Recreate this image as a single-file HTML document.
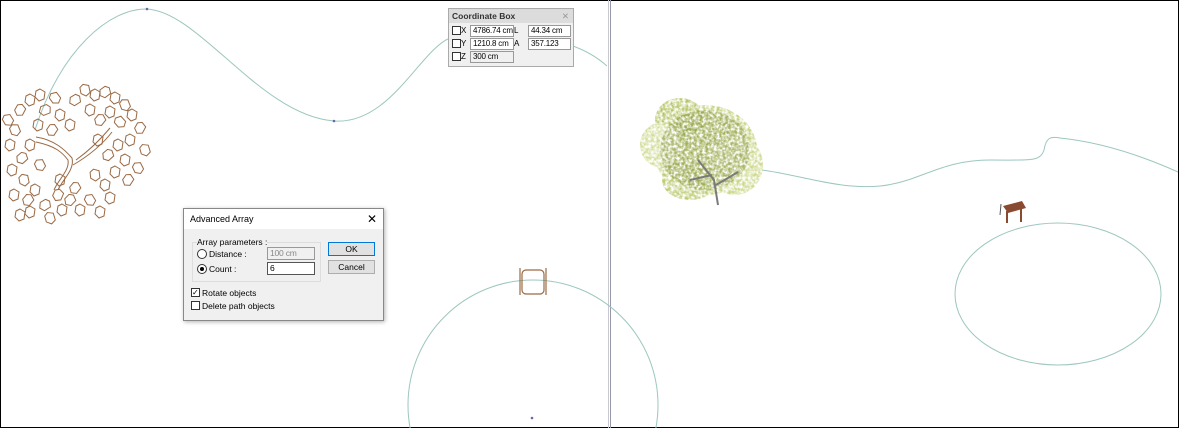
<!DOCTYPE html><html><head><style>
body{margin:0;width:1179px;height:428px;overflow:hidden;background:#fff;font-family:"Liberation Sans",sans-serif;font-size:11px;position:relative}
#c{position:absolute;left:0;top:0;width:1177px;height:426px;border:1px solid #000}
svg{display:block}
.cb{position:absolute;left:448px;top:8px;width:124px;height:57px;background:#f0f0f0;border:1px solid #aaa;font-size:8px}
.cb .t{background:#dcdcdc;height:14px;line-height:14px;padding-left:3px;font-weight:bold;color:#333;font-size:8.5px}
.in{position:absolute;background:#fff;border:1px solid #999;height:10px;line-height:10px;padding-left:2px;font-size:8px;white-space:nowrap;overflow:hidden;letter-spacing:-0.2px}
.ro{background:#f0f0f0}
.ck{position:absolute;width:7px;height:7px;border:1px solid #333;background:#fff}
.dlg{position:absolute;left:183px;top:208px;width:199px;height:111px;background:#f0f0f0;border:1px solid #888;box-shadow:1px 1px 4px rgba(0,0,0,.3);font-size:8.5px;color:#000}
.dlg .ti{background:#fff;height:20px;line-height:20px;padding-left:6px;font-size:9px}
.btn{position:absolute;width:45px;height:12px;line-height:12px;text-align:center;background:#e1e1e1;border:1px solid #adadad}
</style></head><body>
<div id="c"></div>
<svg width="1179" height="428" style="position:absolute;left:0;top:0;overflow:hidden">
<defs>
<path id="l" d="M0,-6 L5,-3 L4,4 L-1,6 L-5,2 L-4,-4Z"/>
<filter id="tx" x="0" y="0" width="1" height="1"><feTurbulence type="fractalNoise" baseFrequency="0.35" numOctaves="2" seed="3"/><feColorMatrix type="matrix" values="0 0 0 0 0  0 0 0 0 0  0 0 0 0 0  0 0 0 -2.2 1.6"/><feComposite in="SourceGraphic" operator="in"/></filter>
</defs>
<line x1="608.5" y1="0" x2="608.5" y2="428" stroke="#c8c8d0" stroke-width="1"/>
<line x1="610.5" y1="0" x2="610.5" y2="428" stroke="#9898a8" stroke-width="1"/>
<g fill="none" stroke="#9cc7bf" stroke-width="1">
<path d="M35,130 C60,50 110,8 147,9 C200,12 260,115 334,121 C390,125 420,50 450,38 M570,45 C585,50 598,58 607,66"/>
<circle cx="533" cy="405" r="125"/>
<ellipse cx="1058" cy="294" rx="103" ry="71"/>
<path d="M762,170 C800,175 840,190 880,186 C920,182 940,160 990,160 C1030,160 1040,162 1044,150 C1046,138 1050,136 1060,138 C1100,142 1140,155 1178,172"/>
</g>
<circle cx="147" cy="9" r="1.3" fill="#66a"/><circle cx="334" cy="121" r="1.3" fill="#66a"/><circle cx="532" cy="418" r="1.3" fill="#66a"/>
<g fill="none" stroke="#9a6a45" stroke-width="1">
<path d="M36,137 C55,140 65,150 72,158 C75,170 62,180 58,190 M36,142 C55,146 62,152 68,160 C70,170 58,180 54,190 M76,160 C90,150 100,140 110,128 M73,165 C90,155 102,145 112,132"/>
<g>
<use href="#l" x="20" y="110" transform="rotate(20 20 110)"/><use href="#l" x="30" y="100"/><use href="#l" x="15" y="130" transform="rotate(-30 15 130)"/><use href="#l" x="10" y="145"/><use href="#l" x="22" y="158" transform="rotate(40 22 158)"/><use href="#l" x="12" y="170"/><use href="#l" x="24" y="180" transform="rotate(-20 24 180)"/><use href="#l" x="14" y="195"/><use href="#l" x="28" y="200" transform="rotate(30 28 200)"/><use href="#l" x="40" y="95"/><use href="#l" x="45" y="110" transform="rotate(60 45 110)"/><use href="#l" x="38" y="125"/><use href="#l" x="55" y="98" transform="rotate(-45 55 98)"/><use href="#l" x="60" y="115"/><use href="#l" x="52" y="130" transform="rotate(25 52 130)"/><use href="#l" x="30" y="145"/><use href="#l" x="40" y="165" transform="rotate(-35 40 165)"/><use href="#l" x="35" y="190"/><use href="#l" x="45" y="205" transform="rotate(50 45 205)"/><use href="#l" x="30" y="212"/><use href="#l" x="50" y="218" transform="rotate(-25 50 218)"/><use href="#l" x="62" y="210"/><use href="#l" x="70" y="200" transform="rotate(35 70 200)"/><use href="#l" x="80" y="210"/><use href="#l" x="90" y="200" transform="rotate(-40 90 200)"/><use href="#l" x="100" y="212"/><use href="#l" x="58" y="195" transform="rotate(15 58 195)"/><use href="#l" x="20" y="215"/><use href="#l" x="85" y="90" transform="rotate(-20 85 90)"/><use href="#l" x="95" y="95"/><use href="#l" x="105" y="92" transform="rotate(45 105 92)"/><use href="#l" x="115" y="98"/><use href="#l" x="125" y="105" transform="rotate(-30 125 105)"/><use href="#l" x="90" y="110"/><use href="#l" x="100" y="120" transform="rotate(30 100 120)"/><use href="#l" x="110" y="112"/><use href="#l" x="120" y="122" transform="rotate(-50 120 122)"/><use href="#l" x="132" y="115"/><use href="#l" x="140" y="128" transform="rotate(20 140 128)"/><use href="#l" x="130" y="140"/><use href="#l" x="145" y="150" transform="rotate(-25 145 150)"/><use href="#l" x="118" y="145"/><use href="#l" x="108" y="155" transform="rotate(40 108 155)"/><use href="#l" x="125" y="160"/><use href="#l" x="138" y="168" transform="rotate(-35 138 168)"/><use href="#l" x="115" y="172"/><use href="#l" x="128" y="180" transform="rotate(25 128 180)"/><use href="#l" x="105" y="185"/><use href="#l" x="95" y="175" transform="rotate(-15 95 175)"/><use href="#l" x="98" y="140"/><use href="#l" x="75" y="100" transform="rotate(50 75 100)"/><use href="#l" x="70" y="125"/><use href="#l" x="8" y="120" transform="rotate(-40 8 120)"/><use href="#l" x="60" y="180"/><use href="#l" x="75" y="188" transform="rotate(30 75 188)"/><use href="#l" x="110" y="198"/>
</g></g>
<g fill="none" stroke="#9a6a45" stroke-width="1.2"><rect x="522" y="270" width="22" height="24" rx="4"/><line x1="520" y1="268" x2="520" y2="295"/><line x1="546" y1="268" x2="546" y2="295"/></g>
<g filter="url(#tx)">
<ellipse cx="705" cy="150" rx="52" ry="45" fill="#c2d07a"/>
<ellipse cx="680" cy="120" rx="25" ry="22" fill="#b4c566"/>
<ellipse cx="735" cy="165" rx="28" ry="30" fill="#cdd88c"/>
<ellipse cx="690" cy="180" rx="28" ry="20" fill="#bccb72"/>
<ellipse cx="660" cy="145" rx="20" ry="22" fill="#d2dc98"/>
</g>
<g opacity=".4" filter="url(#tx)"><ellipse cx="705" cy="150" rx="45" ry="40" fill="#6f7f30"/></g>
<path d="M718,205 L714,180 L698,160 M716,185 L738,172 M712,175 L690,180" stroke="#7a7a7a" stroke-width="2" fill="none"/>
<g fill="#8a4a30"><path d="M1003,206 L1022,201 L1026,208 L1008,213Z"/><rect x="1006" y="211" width="2" height="12"/><rect x="1020" y="208" width="2" height="14"/><path d="M1001,204 L1000,215" stroke="#555" stroke-width="1"/></g>
</svg>
<div class="cb"><div class="t">Coordinate Box<span style="float:right;padding-right:4px;color:#999;font-weight:normal">✕</span></div>
<div class="ck" style="left:3px;top:17px"></div><span style="position:absolute;left:12px;top:17px">X</span><div class="in" style="left:21px;top:16px;width:40px">4786.74 cm</div><span style="position:absolute;left:65px;top:17px">L</span><div class="in" style="left:79px;top:16px;width:39px">44.34 cm</div>
<div class="ck" style="left:3px;top:30px"></div><span style="position:absolute;left:12px;top:30px">Y</span><div class="in" style="left:21px;top:29px;width:40px">1210.8 cm</div><span style="position:absolute;left:65px;top:30px">A</span><div class="in" style="left:79px;top:29px;width:39px">357.123</div>
<div class="ck" style="left:3px;top:43px"></div><span style="position:absolute;left:12px;top:43px">Z</span><div class="in ro" style="left:21px;top:42px;width:40px">300 cm</div></div>
<div class="dlg"><div class="ti">Advanced Array<span style="float:right;padding-right:6px;font-size:12px">✕</span></div>
<div style="position:absolute;left:8px;top:33px;width:127px;height:38px;border:1px solid #ddd"></div>
<span style="position:absolute;left:13px;top:28px;background:#f0f0f0">Array parameters :</span>
<div style="position:absolute;left:13px;top:40px;width:8px;height:8px;border:1px solid #333;border-radius:50%;background:#fff"></div><span style="position:absolute;left:25px;top:40px">Distance :</span>
<div class="in ro" style="left:83px;top:38px;width:44px;height:11px;color:#888;font-size:8.5px">100 cm</div>
<div style="position:absolute;left:13px;top:55px;width:8px;height:8px;border:1px solid #333;border-radius:50%;background:#fff"><div style="margin:2px;width:4px;height:4px;border-radius:50%;background:#000"></div></div><span style="position:absolute;left:25px;top:55px">Count :</span>
<div class="in" style="left:83px;top:53px;width:44px;height:11px;border-color:#555;font-size:8.5px">6</div>
<div class="btn" style="left:144px;top:33px;border:1px solid #0078d7">OK</div>
<div class="btn" style="left:144px;top:51px">Cancel</div>
<div class="ck" style="left:7px;top:79px;font-size:8px;line-height:7px">✓</div><span style="position:absolute;left:18px;top:79px">Rotate objects</span>
<div class="ck" style="left:7px;top:92px"></div><span style="position:absolute;left:18px;top:92px">Delete path objects</span>
</div>
</body></html>
